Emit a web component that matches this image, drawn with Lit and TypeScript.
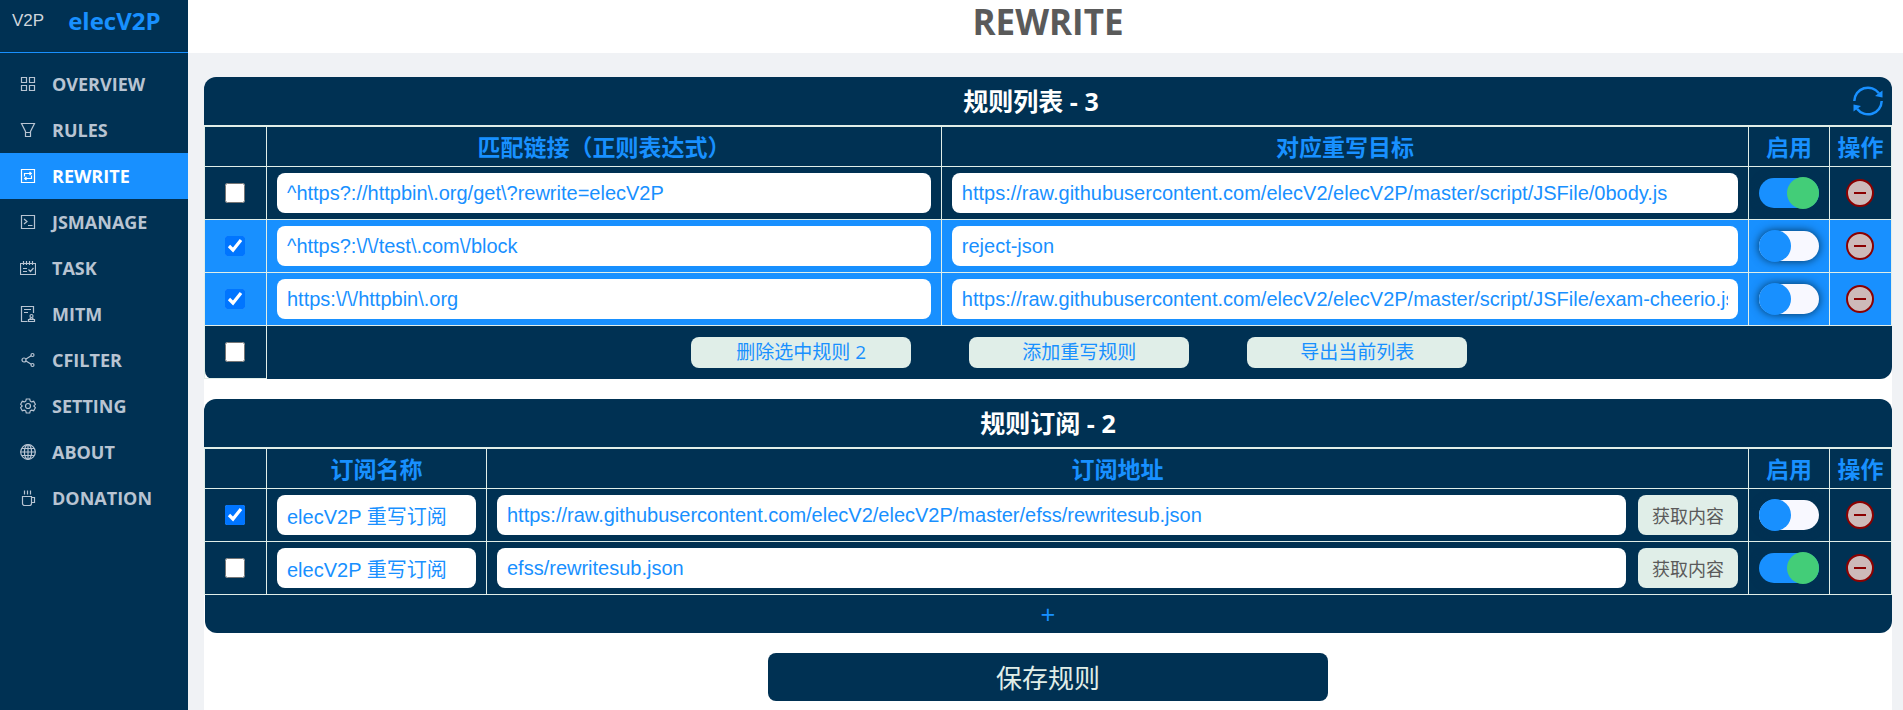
import { LitElement, html, css, svg } from "lit";
import { customElement, property, state } from "lit/decorators.js";
import { classMap } from "lit/directives/class-map.js";

const icons: Record<string, unknown> = {
  overview: svg`<path d="M1.500 1.500h5v5h-5zM9.500 1.500h5v5h-5zM1.500 9.500h5v5h-5zM9.500 9.500h5v5h-5z"/>`,
  rules: svg`<path d="M1.500 1.500h13L10.500 9.500v5h-5v-5zM5.500 10.500h5"/>`,
  rewrite: svg`<path d="M1.500 1.500h13v13h-13z"/><path d="M4.500 8.500V5.500h6.500M9.500 4l1.800 1.500L9.500 7M11.500 7.500v3H5M6.500 9l-1.800 1.500L6.500 12"/>`,
  jsmanage: svg`<path d="M1.500 1.500h13v13h-13z"/><path d="M4 5l3 2.500L4 10M8 11.500h4.500"/>`,
  task: svg`<path d="M.5 3.500h15v11H.5zM3.500 1v4M6.500 1v4M9.500 1v4M12.500 1v4M3 8.500h4M3 11.500h4M8.500 9.500l2 2L13.500 8"/>`,
  mitm: svg`<path d="M7.500 15.500H1.500V.5h12V7M4 3.500h7M4 6.500h4"/><circle cx="11.500" cy="10" r="1.500"/><path d="M10.500 11.500L10 13h3l-.5-1.500M8.500 13.500h6v2h-6z"/>`,
  cfilter: svg`<circle cx="4" cy="8" r="2"/><circle cx="12.500" cy="3" r="1.500"/><circle cx="12.500" cy="13" r="1.500"/><path d="M6 7l5.200-3.200M6 9l5.200 3.200"/>`,
  setting: svg`<path d="M6.300 1h3.400l.6 2.200 1.200.7 2.200-.6 1.700 3-1.600 1.600 1.600 1.800-1.700 3-2.200-.6-1.200.7-.6 2.200H6.300l-.6-2.200-1.200-.7-2.200.6-1.700-3 1.600-1.800L.6 6.300l1.700-3 2.200.6 1.200-.7z"/><circle cx="8" cy="8" r="2.500"/>`,
  about: svg`<circle cx="8" cy="8" r="7.300"/><ellipse cx="8" cy="8" rx="3.600" ry="7.300"/><path d="M8 .7v14.600M.7 8h14.600M2 4.500h12M2 11.500h12"/>`,
  donation: svg`<path d="M2.500 6.500h9v7a2 2 0 0 1-2 2h-5a2 2 0 0 1-2-2zM11.500 7.500h3v5h-3M4.500 .5v4M7.500 .5v4M10.500 .5v4"/>`,
};

interface Rule { match: string; target: string; enable: boolean; checked: boolean; }
interface Sub { name: string; url: string; enable: boolean; checked: boolean; }

@customElement("side-nav")
export class SideNav extends LitElement {
  @property() current = "rewrite";
  static styles = css`
    :host {
      display: block;
      flex: none;
      width: 188px;
      background: #003153;
      font-family: "Open Sans", "Noto Sans", "Noto Sans CJK SC", sans-serif;
    }
    .brand {
      display: flex;
      align-items: center;
      box-sizing: border-box;
      height: 53px;
      padding: 0 0 10px 12px;
      gap: 24px;
      border-bottom: 1px solid #1890ff;
    }
    .logo { font: 17px "Liberation Sans", sans-serif; color: #d0d6dc; }
    .name { font-size: 24px; font-weight: 700; color: #1890ff; text-decoration: none; line-height: 32px; }
    .list { list-style: none; margin: 0; padding: 8px 0 0; }
    .item {
      display: flex;
      align-items: center;
      gap: 16px;
      height: 46px;
      padding-left: 20px;
      font-size: 18px;
      line-height: 24px;
      font-weight: 700;
      color: #b8c4d2;
      text-decoration: none;
    }
    .item.active { background: #1890ff; color: #fff; }
    .icon { width: 16px; height: 16px; fill: none; stroke: currentColor; stroke-width: 1.200; }
  `;
  render() {
    return html`
      <div class="brand"><span class="logo">V2P</span><a class="name" href="#overview">elecV2P</a></div>
      <nav><ul class="list">
        ${Object.keys(icons).map((k) => html`<li>
          <a href="#${k}" class=${classMap({ item: true, active: k === this.current })}>
            <svg class="icon" viewBox="0 0 16 16" aria-hidden="true">${icons[k]}</svg>${k.toUpperCase()}</a>
        </li>`)}
      </ul></nav>`;
  }
}

@customElement("app-root")
export class AppRoot extends LitElement {
  @state() rules: Rule[] = [
    { match: "^https?://httpbin\\.org/get\\?rewrite=elecV2P", target: "https://raw.githubusercontent.com/elecV2/elecV2P/master/script/JSFile/0body.js", enable: true, checked: false },
    { match: "^https?:\\/\\/test\\.com\\/block", target: "reject-json", enable: false, checked: true },
    { match: "https:\\/\\/httpbin\\.org", target: "https://raw.githubusercontent.com/elecV2/elecV2P/master/script/JSFile/exam-cheerio.js", enable: false, checked: true },
  ];
  @state() subs: Sub[] = [
    { name: "elecV2P 重写订阅", url: "https://raw.githubusercontent.com/elecV2/elecV2P/master/efss/rewritesub.json", enable: false, checked: true },
    { name: "elecV2P 重写订阅", url: "efss/rewritesub.json", enable: true, checked: false },
  ];

  static styles = css`
    :host {
      display: flex;
      min-height: 100vh;
      background: #f0f2f5;
      color: #003153;
      font-family: "Open Sans", "Noto Sans", "Noto Sans CJK SC", sans-serif;
    }
    button { font-family: inherit; border: 0; padding: 0; cursor: pointer; }
    .main { flex: 1; min-width: 0; display: flex; flex-direction: column; }
    .head { height: 53px; padding: 0 11px 0 16px; background: #fff; box-sizing: border-box; }
    .head h1 { margin: 0; text-align: center; font-size: 35px; line-height: 44px; font-weight: 700; color: #5a5a5a; }
    .content {
      flex: 1;
      display: flex;
      flex-direction: column;
      align-items: center;
      gap: 20px;
      margin: 24px 11px 0 16px;
      padding-bottom: 8px;
      background: linear-gradient(#f0f2f5 16px, #fff 16px);
    }
    .panel { width: 100%; }
    .caption {
      display: flex;
      align-items: center;
      height: 48px;
      background: #003153;
      border-bottom: 1px solid #e0eee8;
      border-radius: 12px 12px 0 0;
    }
    .caption h2 { flex: 1; margin: 0; text-align: center; font-size: 25px; line-height: 32px; font-weight: 700; color: #fff; }
    .caption.tools h2 { padding-left: 14px; }
    .refresh { width: 48px; height: 48px; background: none; display: grid; place-items: center; }
    .refresh svg { width: 30px; height: 30px; fill: none; stroke: #1890ff; stroke-width: 2.500; }
    .refresh .tip { fill: #1890ff; stroke: none; }
    table { width: 100%; table-layout: fixed; border-collapse: collapse; }
    .c-pick { width: 62px; }
    .c-match { width: 40%; }
    .c-name { width: 220px; }
    .c-on { width: 81px; }
    .c-op { width: 62px; }
    th {
      height: 39px;
      padding: 0;
      border: 1px solid #e0eee8;
      background: #003153;
      color: #1890ff;
      font-size: 23px;
      line-height: 32px;
      font-weight: 700;
    }
    td { padding: 6px 10px; border: 1px solid #e0eee8; background: #003153; text-align: center; vertical-align: middle; }
    .picked td { background: #1890ff; }
    td.all { border-radius: 0 0 0 8px; height: 40px; }
    td.foot { border: 0; border-top: 1px solid #e0eee8; border-radius: 0 0 12px 0; }
    td.more { border: 0; border-top: 1px solid #e0eee8; padding: 0; border-radius: 0 0 12px 12px; }
    .pick { display: block; width: 20px; height: 20px; margin: 0 10px; }
    .text {
      display: block;
      box-sizing: border-box;
      width: 100%;
      min-width: 0;
      height: 40px;
      padding: 0 10px;
      border: 0;
      border-radius: 8px;
      background: #fff;
      color: #1890ff;
      font: 20px "Liberation Sans", "Noto Sans CJK SC", sans-serif;
    }
    .pair { display: flex; gap: 12px; }
    .fetch { flex: none; width: 100px; height: 40px; border-radius: 8px; background: #e0eee8; color: #5a5a5a; font-size: 18px; }
    .switch {
      appearance: none;
      display: flex;
      align-items: center;
      width: 60px;
      height: 30px;
      margin: 0;
      border-radius: 15px;
      background: #f8f8ff;
      box-shadow: 0 0 10px #003153;
      cursor: pointer;
    }
    .switch::before { content: ""; flex: none; width: 32px; height: 32px; border-radius: 50%; background: #1890ff; }
    .switch:checked { background: #1890ff; justify-content: flex-end; }
    .switch:checked::before { background: #43cd78; }
    .del { display: block; width: 28px; height: 28px; margin: 0 6px; background: none; }
    .del svg { display: block; width: 28px; height: 28px; fill: #cdbab9; stroke: #8b0000; stroke-width: 2; }
    .acts { display: flex; justify-content: center; gap: 58px; }
    .act { width: 220px; height: 31px; border-radius: 8px; background: #e0eee8; color: #1890ff; font-size: 19px; line-height: 30px; }
    .add { display: block; width: 100%; height: 38px; background: none; color: #1890ff; font-size: 26px; line-height: 38px; }
    .save { width: 560px; max-width: 100%; height: 48px; border-radius: 8px; background: #003153; color: #e0eee8; font-size: 26px; }
  `;

  private flip(list: "rules" | "subs", i: number, key: "checked" | "enable") {
    (this as any)[list] = (this[list] as any[]).map((r, n) => (n === i ? { ...r, [key]: !r[key] } : r));
  }
  private drop(list: "rules" | "subs", i: number) {
    (this as any)[list] = (this[list] as any[]).filter((_, n) => n !== i);
  }
  private pick(list: "rules" | "subs", r: { checked: boolean }, i: number) {
    return html`<td><input class="pick" type="checkbox" aria-label="选择 ${i + 1}" .checked=${r.checked} @change=${() => this.flip(list, i, "checked")}></td>`;
  }
  private tail(list: "rules" | "subs", r: { enable: boolean }, i: number) {
    return html`
      <td><input class="switch" type="checkbox" role="switch" aria-label="启用 ${i + 1}" .checked=${r.enable} @change=${() => this.flip(list, i, "enable")}></td>
      <td><button class="del" aria-label="删除 ${i + 1}" @click=${() => this.drop(list, i)}>
        <svg viewBox="0 0 28 28"><circle cx="14" cy="14" r="13"/><path d="M8 14h12"/></svg>
      </button></td>`;
  }

  render() {
    const picked = this.rules.filter((r) => r.checked).length;
    return html`
      <side-nav></side-nav>
      <main class="main">
        <header class="head"><h1>REWRITE</h1></header>
        <div class="content">
          <section class="panel">
            <div class="caption tools">
              <h2>规则列表 - ${this.rules.length}</h2>
              <button class="refresh" aria-label="刷新">
                <svg viewBox="0 0 30 30">
                  <path d="M1.300 15A13.700 13.700 0 0 1 26 7.200M28.700 15A13.700 13.700 0 0 1 4 22.800"/>
                  <path class="tip" d="M29.500 4.500V11.500L22 10zM.5 25.500V18.500L8 20z"/>
                </svg>
              </button>
            </div>
            <table>
              <colgroup><col class="c-pick"><col class="c-match"><col><col class="c-on"><col class="c-op"></colgroup>
              <thead><tr><th></th><th>匹配链接（正则表达式）</th><th>对应重写目标</th><th>启用</th><th>操作</th></tr></thead>
              <tbody>
                ${this.rules.map((r, i) => html`<tr class=${classMap({ picked: r.checked })}>
                  ${this.pick("rules", r, i)}
                  <td><input class="text" type="text" aria-label="匹配链接" .value=${r.match}></td>
                  <td><input class="text" type="text" aria-label="对应重写目标" .value=${r.target}></td>
                  ${this.tail("rules", r, i)}
                </tr>`)}
                <tr>
                  <td class="all"><input class="pick" type="checkbox" aria-label="全选"></td>
                  <td class="foot" colspan="4"><div class="acts">
                    <button class="act">删除选中规则 ${picked}</button>
                    <button class="act">添加重写规则</button>
                    <button class="act">导出当前列表</button>
                  </div></td>
                </tr>
              </tbody>
            </table>
          </section>
          <section class="panel">
            <div class="caption"><h2>规则订阅 - ${this.subs.length}</h2></div>
            <table>
              <colgroup><col class="c-pick"><col class="c-name"><col><col class="c-on"><col class="c-op"></colgroup>
              <thead><tr><th></th><th>订阅名称</th><th>订阅地址</th><th>启用</th><th>操作</th></tr></thead>
              <tbody>
                ${this.subs.map((s, i) => html`<tr>
                  ${this.pick("subs", s, i)}
                  <td><input class="text" type="text" aria-label="订阅名称" .value=${s.name}></td>
                  <td><div class="pair">
                    <input class="text" type="text" aria-label="订阅地址" .value=${s.url}>
                    <button class="fetch">获取内容</button>
                  </div></td>
                  ${this.tail("subs", s, i)}
                </tr>`)}
                <tr><td class="more" colspan="5"><button class="add" aria-label="添加订阅">+</button></td></tr>
              </tbody>
            </table>
          </section>
          <button class="save">保存规则</button>
        </div>
      </main>`;
  }
}
